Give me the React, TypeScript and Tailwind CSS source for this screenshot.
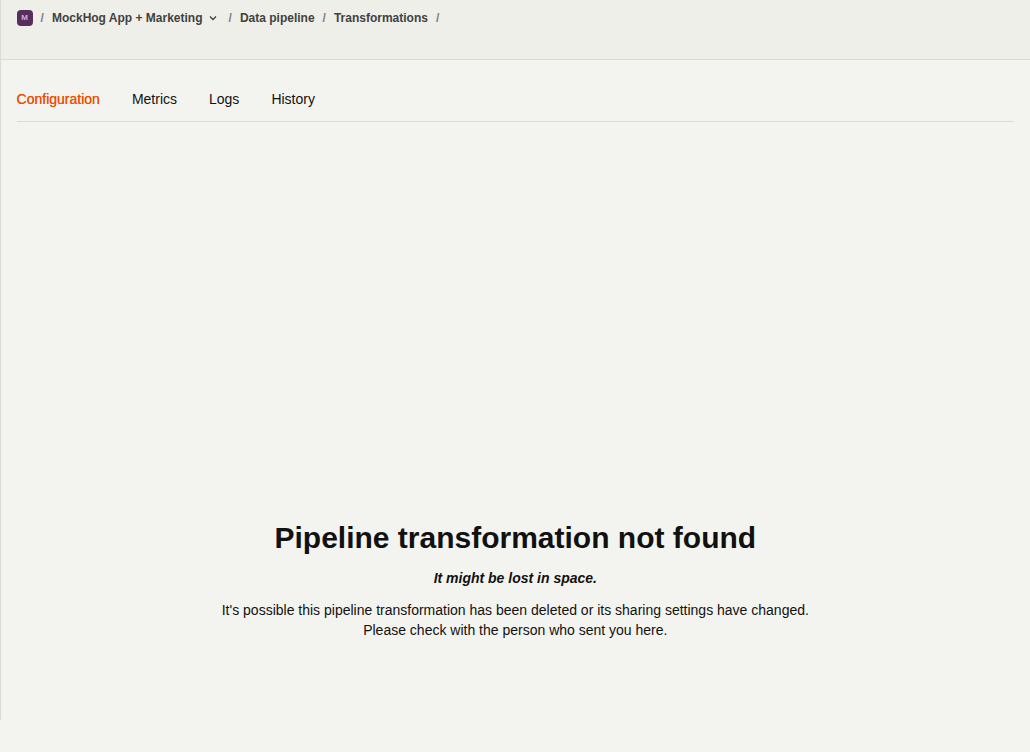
import React from "react";

const tabs = ["Configuration", "Metrics", "Logs", "History"];

function Slash() {
  return <span className="mx-2 text-[#80807c]">/</span>;
}

function Breadcrumbs() {
  return (
    <nav className="flex h-4 items-center text-xs font-bold text-[#41423f]">
      <span className="flex h-4 w-4 items-center justify-center rounded-[4px] bg-[#572e5e] text-[8px] text-[#d9a8df]">M</span>
      <Slash />
      <span>MockHog App + Marketing</span>
      <svg className="ml-1 mr-0.5 h-3 w-3" viewBox="0 0 24 24" fill="none" stroke="currentColor" strokeWidth="2.6">
        <path d="m6 9 6 6 6-6" />
      </svg>
      <Slash />
      <span>Data pipeline</span>
      <Slash />
      <span>Transformations</span>
      <Slash />
    </nav>
  );
}

export default function App() {
  return (
    <div className="h-[752px] overflow-hidden bg-[#f3f4ef] font-['Liberation_Sans',Arial,sans-serif] text-sm text-[#111] antialiased">
      <div className="-ml-[0.4px] flex h-[720px] w-[1030.4px] flex-col border-l border-[#dadbd4]">
        <header className="h-[60px] shrink-0 border-b border-[#dadbd4] bg-[#eeefe9] px-4 pt-2.5">
          <Breadcrumbs />
        </header>
        <main className="px-4 pt-4">
          <div className="flex h-[46px] items-center gap-8 border-b border-[#dadbd4]">
            {tabs.map((tab, i) => (
              <button key={tab} className={i === 0 ? "text-[#f54e00] [text-shadow:0_0_0.25px_currentColor]" : ""}>
                {tab}
              </button>
            ))}
          </div>
          <section className="mt-[396px] flex flex-col items-center text-center leading-5">
            <h1 className="text-[30px] leading-10 font-bold">Pipeline transformation not found</h1>
            <p className="mt-2.5 font-bold italic">It might be lost in space.</p>
            <p className="mt-3">
              It's possible this pipeline transformation has been deleted or its sharing settings have changed.
              <br />
              Please check with the person who sent you here.
            </p>
          </section>
        </main>
      </div>
    </div>
  );
}
